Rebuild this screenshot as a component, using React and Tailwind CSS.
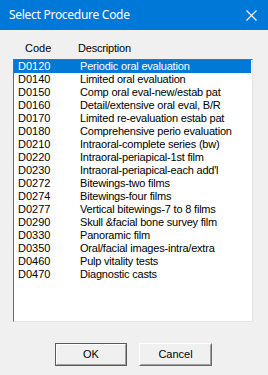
import React from "react";

const codes = [
  ["D0120", "Periodic oral evaluation"],
  ["D0140", "Limited oral evaluation"],
  ["D0150", "Comp oral eval-new/estab pat"],
  ["D0160", "Detail/extensive oral eval, B/R"],
  ["D0170", "Limited re-evaluation estab pat"],
  ["D0180", "Comprehensive perio evaluation"],
  ["D0210", "Intraoral-complete series (bw)"],
  ["D0220", "Intraoral-periapical-1st film"],
  ["D0230", "Intraoral-periapical-each add'l"],
  ["D0272", "Bitewings-two films"],
  ["D0274", "Bitewings-four films"],
  ["D0277", "Vertical bitewings-7 to 8 films"],
  ["D0290", "Skull &facial bone survey film"],
  ["D0330", "Panoramic film"],
  ["D0350", "Oral/facial images-intra/extra"],
  ["D0460", "Pulp vitality tests"],
  ["D0470", "Diagnostic casts"],
];

const ui = { fontFamily: '"Liberation Sans", Arial, sans-serif' };

export default function App() {
  const selected = 0;

  return (
    <div className="w-[268px] h-[375px] bg-[#f0f0f0] flex flex-col overflow-hidden" style={ui}>
      {/* title bar */}
      <div className="h-[30px] bg-[#0078d7] flex items-center justify-between pl-[9px] pr-[11px] shrink-0">
        <span
          className="text-white text-[12px] tracking-[-0.28px]"
          style={{ fontFamily: '"Noto Sans", "Open Sans", sans-serif' }}
        >
          Select Procedure Code
        </span>
        <svg width="11" height="11" viewBox="0 0 11 11" className="text-white">
          <path d="M0.5 0.5 L10.5 10.5 M10.5 0.5 L0.5 10.5" stroke="currentColor" strokeWidth="1.1" fill="none" />
        </svg>
      </div>

      {/* column headers */}
      <div className="flex pt-[12px] text-[11px] leading-[13px] text-black">
        <span className="pl-[25px] w-[78px]">Code</span>
        <span className="tracking-[-0.2px]">Description</span>
      </div>

      {/* list */}
      <div className="ml-[13px] mt-[4px] w-[240px] h-[263px] border border-t-[#696969] border-l-[#696969] border-b-[#e3e3e3] border-r-[#e3e3e3] bg-white">
        {codes.map(([code, desc], i) => (
          <div
            key={code}
            className={`flex h-[13px] items-center text-[11px] leading-[13px] whitespace-nowrap mr-[1px] ${
              i === selected ? "bg-[#0078d7] text-white" : "text-black"
            }`}
          >
            <span className="w-[66px] pl-[4px]">{code}</span>
            <span className="tracking-[-0.2px]">{desc}</span>
          </div>
        ))}
      </div>

      {/* buttons */}
      <div className="flex pl-[55px] gap-[12px] mt-[21px]">
        <button className="w-[72px] h-[23px] border border-[#5a5a5a] bg-[#f0f0f0] p-0">
          <div className="w-full h-full border border-t-white border-l-white border-b-[#a0a0a0] border-r-[#a0a0a0] flex items-center justify-center text-[11px] text-black">
            OK
          </div>
        </button>
        <button className="w-[73px] h-[23px] border border-t-white border-l-white border-b-[#696969] border-r-[#696969] bg-[#f0f0f0] p-0">
          <div className="w-full h-full border border-transparent border-b-[#a0a0a0] border-r-[#a0a0a0] flex items-center justify-center text-[11px] text-black">
            Cancel
          </div>
        </button>
      </div>
    </div>
  );
}
